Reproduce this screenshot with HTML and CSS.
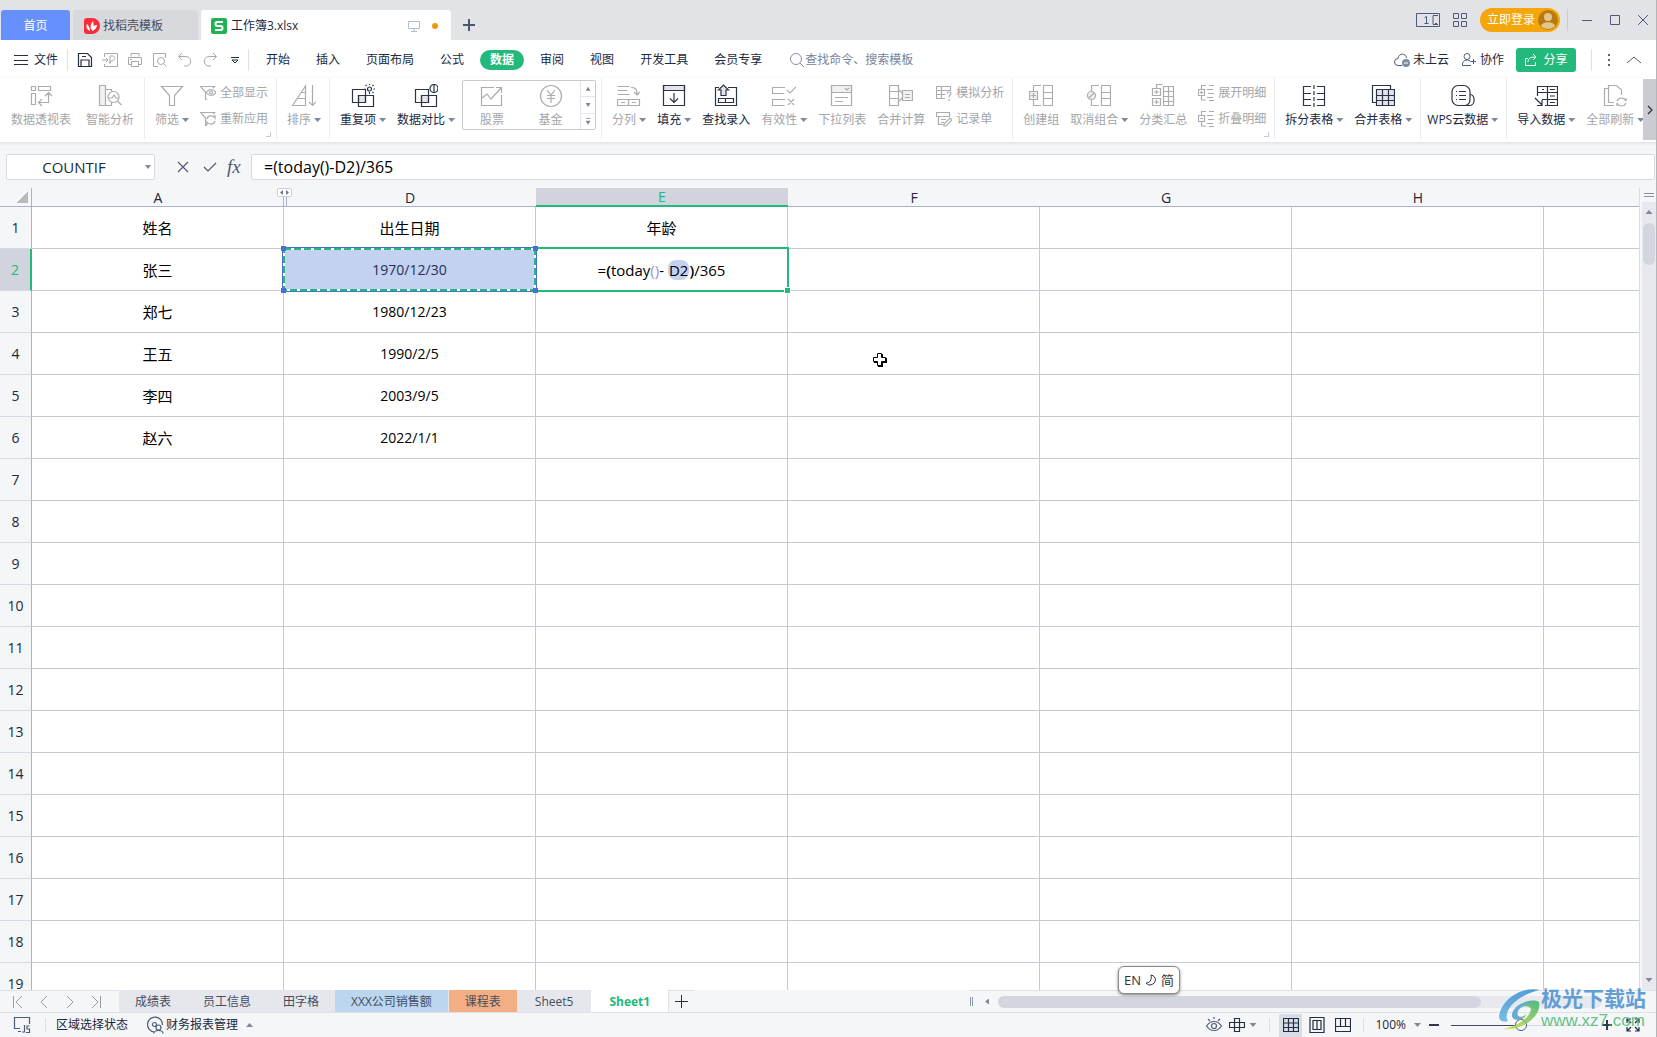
FILE: index.html
```html
<!DOCTYPE html>
<html lang="zh-CN">
<head>
<meta charset="utf-8">
<title>工作簿3.xlsx</title>
<link rel="stylesheet" href="styles.css">
</head>
<body>
<header class="titlebar">
  <button class="doc-tab home">首页</button>
  <button class="doc-tab template">
    <svg width="16" height="16" viewBox="0 0 16 16"><path d="M3 0h5a8 8 0 0 1 0 16H3a3 3 0 0 1-3-3V3a3 3 0 0 1 3-3z" fill="#fb2c36"/><path d="M6 13C2 11 2 8 3 6c2 2 3 4 3 7zM7 12c-1-4 0-7 2-9 1 4 1 6-2 9zM8 13c0-4 2-6 5-6 0 3-2 5-5 6z" fill="#fff"/></svg>
    <span>找稻壳模板</span>
  </button>
  <button class="doc-tab current">
    <svg width="16" height="16" viewBox="0 0 16 16"><rect width="16" height="16" rx="2" fill="#1fb254"/><path d="M12 4H6.500a2 2 0 0 0 0 4h3a2 2 0 0 1 0 4H4" fill="none" stroke="#fff" stroke-width="2"/></svg>
    <span class="doc-name">工作簿3.xlsx</span>
    <svg width="12" height="12" viewBox="0 0 12 12" class="line pale"><path d="M.5 1.500h11v7H.5zM6 8.500v3M3 11.500h6"/></svg>
    <i class="unsaved"></i>
  </button>
  <button class="new-tab" aria-label="新建"><svg width="12" height="12" viewBox="0 0 12 12" stroke="#4a566d" stroke-width="2"><path d="M6 0v12M0 6h12"/></svg></button>
  <div class="window-tools">
    <svg width="24" height="16" viewBox="0 0 24 16" class="line slate"><path d="M.5 1.500h23v13H.5zM8.500 5.500l2-1v7M8.500 11.500h4M22 3.500h-5v9h5M19 11.500h2"/></svg>
    <svg width="14" height="14" viewBox="0 0 14 14" class="line slate"><path d="M.5.5h5v5h-5zM8.500.5h5v5h-5zM.5 8.500h5v5h-5zM8.500 8.500h5v5h-5z"/></svg>
    <button class="login">立即登录<svg width="20" height="20" viewBox="0 0 20 20"><circle cx="10" cy="10" r="10" fill="#b87a0c"/><circle cx="10" cy="7" r="4" fill="#e2c48d"/><path d="M3 16c1-5 13-5 14 0-3 4-11 4-14 0z" fill="#e2c48d"/></svg></button>
    <i class="rule"></i>
    <div class="window-buttons">
      <button aria-label="最小化"><svg width="12" height="12" viewBox="0 0 12 12" class="line slate"><path d="M1 6.500h10"/></svg></button>
      <button aria-label="最大化"><svg width="12" height="12" viewBox="0 0 12 12" class="line slate"><path d="M1.500 1.500h9v9h-9z"/></svg></button>
      <button aria-label="关闭"><svg width="12" height="12" viewBox="0 0 12 12" class="line slate"><path d="M1 1l10 10M11 1L1 11"/></svg></button>
    </div>
  </div>
</header>

<nav class="menubar">
  <button class="file"><svg width="14" height="12" viewBox="0 0 14 12" class="line dark"><path d="M0 1.500h14M0 6.500h14M0 10.500h14"/></svg>文件</button>
  <i class="rule"></i>
  <div class="quick">
    <button aria-label="保存"><svg width="16" height="16" viewBox="0 0 16 16" class="line dark strong"><path d="M1.500 1.500h9l4 4v9h-13zM4 14V8h8v6M5 4.500h4"/></svg></button>
    <button aria-label="输出为PDF"><svg width="16" height="16" viewBox="0 0 16 16" class="line gray"><path d="M2.500 5V1.500h13v13h-13V12M0 8h6M4 6l2 2-2 2M8 12V4h3c3 1 2 4-1 5-2 0-3 1-3 2"/></svg></button>
    <button aria-label="打印"><svg width="16" height="16" viewBox="0 0 16 16" class="line gray"><path d="M4 4.500v-3h8v3M4 12.500H1.500v-7h13v7H12M4.500 9.500h7v5h-7zM3 7.500h2"/></svg></button>
    <button aria-label="打印预览"><svg width="16" height="16" viewBox="0 0 16 16" class="line gray"><path d="M6 14.500H1.500v-13h12V6"/><circle cx="9" cy="9" r="3.500"/><path d="M11.500 11.500l3 3"/></svg></button>
    <button aria-label="撤销"><svg width="16" height="16" viewBox="0 0 16 16" class="line gray"><path d="M5 1L1.500 4.500 5 8M2 4.500h7a4.500 4.500 0 0 1 0 9.500H7"/></svg></button>
    <button aria-label="恢复"><svg width="16" height="16" viewBox="0 0 16 16" class="line gray"><path d="M11 1l3.500 3.500L11 8M14 4.500H7a4.500 4.500 0 0 0 0 9.500h2"/></svg></button>
    <button class="more" aria-label="自定义快速访问"><svg width="8" height="8" viewBox="0 0 8 8" class="line dark"><path d="M0 1.500h8M1 4l3 3 3-3z"/></svg></button>
  </div>
  <i class="rule"></i>
  <div class="tabs">
    <button>开始</button><button>插入</button><button>页面布局</button><button>公式</button><button class="on">数据</button><button>审阅</button><button>视图</button><button>开发工具</button><button>会员专享</button>
  </div>
  <button class="find"><svg width="16" height="16" viewBox="0 0 16 16" class="line blue"><circle cx="7" cy="7" r="5.500"/><path d="M11 11l4 4"/></svg>查找命令、搜索模板</button>
  <div class="menu-right">
    <button><svg width="16" height="16" viewBox="0 0 16 16" class="line slate"><path d="M8 13.500H4a3.500 3.500 0 0 1 0-7C5 .5 12 1 12.500 6"/><circle cx="12" cy="11" r="4" fill="#7f8aa3" stroke="none"/><path d="M10 11h4" stroke="#fff"/></svg>未上云</button>
    <button><svg width="16" height="16" viewBox="0 0 16 16" class="line slate"><circle cx="6" cy="4.500" r="3"/><path d="M10 13.500H1.500C.5 7 9 7 10 10M10 9.500h5M12.500 7v5"/></svg>协作</button>
    <button class="share"><svg width="14" height="14" viewBox="0 0 14 14" class="line white"><path d="M4 5.500H1.500v7h10V9M4 9c0-4 3-5 8-5M9 1l3 3-3 3"/></svg>分享</button>
    <i class="rule"></i>
    <button class="dots" aria-label="更多"><svg width="4" height="14" viewBox="0 0 4 14" fill="#5a6378"><path d="M1 1h2v2H1zM1 6h2v2H1zM1 11h2v2H1z"/></svg></button>
    <button aria-label="折叠功能区"><svg width="14" height="8" viewBox="0 0 14 8" class="line slate"><path d="M0 7l7-6 7 6"/></svg></button>
  </div>
</nav>

<section class="ribbon">
  <div class="groups">
    <div class="group wide">
      <button class="tool off"><svg width="24" height="24" viewBox="0 0 24 24"><path d="M2.500 2.500h4v4h-4zM9.500 2.500h12v4h-12zM2.500 9.500h4v11h-4zM10 18.500h9.500V9M13 15l-3.500 3.500L13 22M16 12l3.500-3.500L23 12"/></svg><span>数据透视表</span></button>
      <button class="tool off"><svg width="24" height="24" viewBox="0 0 24 24"><path class="tint" d="M1.500 1.500h6v20h-6z"/><path d="M7.500 5.500h6V8M13.500 18v3.500h-6"/><circle cx="15.500" cy="13" r="5.500"/><path d="M19.500 17l4 4M11 14h3l2-3 2 3h2"/></svg><span>智能分析</span></button>
    </div>
    <div class="group">
      <button class="tool off"><svg width="24" height="24" viewBox="0 0 24 24"><path d="M1.500 2.500h21l-8 9v10h-5v-10z"/></svg><span>筛选<b class="caret"></b></span></button>
      <div class="pair">
        <button class="small off"><svg width="16" height="16" viewBox="0 0 16 16"><path d="M7 14.500H5.500V7L.5 1.500h14L13 3"/><path d="M6 7.500c3-4 7-4 10 0-3 4-7 4-10 0z"/><circle cx="11" cy="7.500" r="1.500"/></svg>全部显示</button>
        <button class="small off"><svg width="16" height="16" viewBox="0 0 16 16"><path d="M7 14.500H5.500V7L.5 1.500h14L13 3M7 8c1-4 6-4 8-1V4M15 10c-1 4-6 4-8 1v3"/></svg>重新应用</button>
      </div>
      <i class="launcher"></i>
    </div>
    <div class="group">
      <button class="tool off"><svg width="24" height="24" viewBox="0 0 24 24"><path d="M.5 21.500L13.500 2v19.500zM9 8.500h4M5 14.500h8M20.500 1v20M17 18l3.500 3.500L24 18"/></svg><span>排序<b class="caret"></b></span></button>
    </div>
    <div class="group open">
      <button class="tool"><svg width="24" height="24" viewBox="0 0 24 24"><path class="tint" d="M7.500 11.500h7v7h-7z"/><path d="M1.500 5.500h13v13h-13zM7.500 11.500h15v11h-15z"/><circle class="paper" cx="18.500" cy="5" r="2"/><path d="M18.500 0v1M18.500 8v2M13.500 5h1M22.500 5h2M14.500 1l1 1M22.500 1l-1 1M22.500 9l-1-1"/></svg><span>重复项<b class="caret"></b></span></button>
      <button class="tool"><svg width="24" height="24" viewBox="0 0 24 24"><path class="tint" d="M7.500 11.500h7v7h-7z"/><path d="M1.500 5.500h13v13h-13zM7.500 11.500h15v11h-15z"/><circle class="paper" cx="20" cy="4.500" r="4"/><path d="M20 .5v8"/></svg><span>数据对比<b class="caret"></b></span></button>
    </div>
    <div class="group gallery-group">
      <div class="gallery">
        <button class="tool off"><svg width="24" height="24" viewBox="0 0 24 24"><path d="M14 3.500H1.500v18h20V11M2 14l5-4 4 5L21 4M16 3.500h5.500V9"/></svg><span>股票</span></button>
        <button class="tool off"><svg width="24" height="24" viewBox="0 0 24 24"><circle cx="12" cy="12" r="10.500"/><path d="M8 6l4 5 4-5M12 11v8M8 11.500h8M8 14.500h8"/></svg><span>基金</span></button>
        <div class="gallery-scroll"><button aria-label="上一行"><b class="caret up"></b></button><button aria-label="下一行"><b class="caret"></b></button><button aria-label="展开"><b class="caret barred"></b></button></div>
      </div>
    </div>
    <div class="group">
      <button class="tool off"><svg width="24" height="24" viewBox="0 0 24 24"><path d="M.5 2.500h12M.5 6.500h10M.5 10.500h12M14 3.500c4 0 6 1 6 7M17 8l3 3 3-3M.5 15.500h22v6H.5zM11.500 15.500v6M4 18.500h4M15 18.500h4"/></svg><span>分列<b class="caret"></b></span></button>
      <button class="tool"><svg width="24" height="24" viewBox="0 0 24 24"><path class="tint" d="M1.500 1.500h21v5h-21z"/><path d="M1.500 1.500h21v20h-21zM12 9v9M8 14.500l4 4 4-4"/></svg><span>填充<b class="caret"></b></span></button>
      <button class="tool"><svg width="24" height="24" viewBox="0 0 24 24"><path d="M5 3.500H1.500v18h21v-18H14M4.500 14.500h15v4h-15zM11.500 14.500v4"/><path class="tint" d="M7 11.500V6H4.500l5-5 5 5H12v5.500z"/></svg><span>查找录入</span></button>
      <button class="tool off"><svg width="24" height="24" viewBox="0 0 24 24"><path d="M13 3.500H.5v6h12M13 15.500H.5v6h12M15 6l3 3 6-6M16 15l6 6M22 15l-6 6"/></svg><span>有效性<b class="caret"></b></span></button>
      <button class="tool off"><svg width="24" height="24" viewBox="0 0 24 24"><path class="tint" d="M1.500 1.500h20v7h-20z"/><path d="M1.500 1.500h20v20h-20zM15 4l2 2 2-2M5 13.500h13M5 17.500h8"/></svg><span>下拉列表</span></button>
      <button class="tool off"><svg width="24" height="24" viewBox="0 0 24 24"><path d="M.5 1.500h9v20h-9zM.5 7.500h9M.5 14.500h9M10 6l4 4M10 17l4-4"/><path class="tint" d="M13.500 6.500h10v10h-10z"/><path d="M16 10.500h5M16 13.500h5"/></svg><span>合并计算</span></button>
      <div class="pair">
        <button class="small off"><svg width="16" height="16" viewBox="0 0 16 16"><path d="M9 13.500H.5v-12h14V6M.5 5.500h14M.5 9.500h9M5.500 1.500v12M11 8.500c0-2 4-2 4 0s-2 1-2 4M13 14v2"/></svg>模拟分析</button>
        <button class="small off"><svg width="16" height="16" viewBox="0 0 16 16"><path d="M13.500 6V1.500H.5v4h13M2.500 5.500v8H7M5 8.500h5M5 11.500h3M8 15v-2l6-6 2 2-6 6z"/></svg>记录单</button>
      </div>
    </div>
    <div class="group">
      <button class="tool off"><svg width="24" height="24" viewBox="0 0 24 24"><path d="M12 1.500H4.500V7M4.500 16v5.500H12"/><path class="tint" d="M.5 7.500h8v8h-8z"/><path d="M2 11.500h5M4.500 9v5M14.500 1.500h9v20h-9zM14.500 8.500h9M14.500 14.500h9"/></svg><span>创建组</span></button>
      <button class="tool off"><svg width="24" height="24" viewBox="0 0 24 24"><path d="M12 1.500H4.500V7M4.500 16v5.500H12"/><circle class="tint" cx="4.500" cy="11.500" r="4"/><path d="M2 14l5-5M14.500 1.500h9v20h-9zM14.500 8.500h9M14.500 14.500h9"/></svg><span>取消组合<b class="caret"></b></span></button>
      <button class="tool off"><svg width="24" height="24" viewBox="0 0 24 24"><path d="M5.500 4V.5h6M1.500 4.500h8v7h-8zM1.500 14.500h8v7h-8zM3 8h5M5.500 6v4M3 18h5M5.500 16v4M12.500 2.500h10v19h-10zM17.500 2.500v19M12.500 7.500h10M12.500 12.500h10M12.500 17.500h10"/></svg><span>分类汇总</span></button>
      <div class="pair">
        <button class="small off"><svg width="16" height="16" viewBox="0 0 16 16"><path d="M8 .5H3.500V4M3.500 11v4H8M.5 4.500h6v6h-6zM2 7.500h3M3.500 6v3M11 .5h5M9 4.500h6M10 8.500h6M9 12.500h6M11 15.500h5"/></svg>展开明细</button>
        <button class="small off"><svg width="16" height="16" viewBox="0 0 16 16"><path d="M8 .5H3.500V4M3.500 11v4H8M.5 4.500h6v6h-6zM2 7.500h3M11 .5h5M9 4.500h6M10 8.500h6M9 12.500h6M11 15.500h5"/></svg>折叠明细</button>
      </div>
      <i class="launcher"></i>
    </div>
    <div class="group">
      <button class="tool"><svg width="24" height="24" viewBox="0 0 24 24"><path d="M9 2.500H1.500v19H9M1.500 9.500H9M1.500 15.500H9M15 2.500h7.500v19H15M22.500 9.500H15M22.500 15.500H15"/><path d="M12 1v22" stroke-dasharray="4 2"/></svg><span>拆分表格<b class="caret"></b></span></button>
      <button class="tool"><svg width="24" height="24" viewBox="0 0 24 24"><path d="M1.500 18.500v-17h18v17z"/><path class="tint" d="M5.500 5.500h18v16h-18z"/><path d="M5.500 11.500h18M5.500 16.500h18M11.500 5.500v16M17.500 5.500v16"/></svg><span>合并表格<b class="caret"></b></span></button>
    </div>
    <div class="group tight">
      <button class="tool"><svg width="24" height="24" viewBox="0 0 24 24"><path d="M14 21.500H7c-3 0-6-3-6-6v-8c0-3 3-6 6-6h6c3 0 6 3 6 6v8c0 3-2 6-5 6h5c5 0 6-11 0-11M5 7.500h1M8 7.500h7M5 11.500h1M8 11.500h7M5 15.500h1M8 15.500h7"/></svg><span>WPS云数据<b class="caret"></b></span></button>
    </div>
    <div class="group last">
      <button class="tool"><svg width="24" height="24" viewBox="0 0 24 24"><path d="M3.500 12V2.500h20v19H11M3.500 8.500h20M8 15.500h15M13.500 2.500v19M8 5.500h2M16 5.500h5M16 12h5M16 18.500h5M1 14l7 7M8 16v5.500H3"/></svg><span>导入数据<b class="caret"></b></span></button>
      <button class="tool off"><svg width="24" height="24" viewBox="0 0 24 24"><path d="M18.500 11V6l-5-4.500h-8v17H11M5 4.500H1.500v17H11M14 17c2-4 7-4 9 0v-3M23 19c-2 4-7 4-9 0v3"/></svg><span>全部刷新<b class="caret"></b></span></button>
    </div>
  </div>
  <button class="ribbon-next" aria-label="向右滚动"><svg width="6" height="10" viewBox="0 0 6 10" class="line dark strong"><path d="M1 1l4 4-4 4"/></svg></button>
</section>

<section class="formula-bar">
  <div class="name-box"><input aria-label="名称框" value="COUNTIF"><b class="caret"></b></div>
  <div class="entry-buttons">
    <button aria-label="取消"><svg width="12" height="12" viewBox="0 0 12 12" class="line slate strong"><path d="M1 1l10 10M11 1L1 11"/></svg></button>
    <button aria-label="输入"><svg width="14" height="12" viewBox="0 0 14 12" class="line slate strong"><path d="M1 6l4 4 8-8"/></svg></button>
    <button class="fx" aria-label="插入函数">fx</button>
  </div>
  <input class="formula" aria-label="编辑栏" value="=(today()-D2)/365">
</section>

<main class="sheet">
  <div class="grid">
    <table>
      <colgroup><col class="c-num"><col class="c"><col class="c"><col class="c"><col class="c"><col class="c"><col class="c"><col></colgroup>
      <thead><tr><th class="corner"></th><th>A<span class="hidden-cols"><svg width="15" height="9" viewBox="0 0 15 9"><rect x=".5" y=".5" width="14" height="8" rx="1" fill="#fff" stroke="#c9cdd6"/><path d="M6 2v5L3 4.500zM9 2v5l3-2.500z" fill="#6b7690"/></svg></span></th><th>D</th><th class="on">E</th><th>F</th><th>G</th><th>H</th><th></th></tr></thead>
      <tbody>
        <tr class="titles"><th>1</th><td>姓名</td><td>出生日期</td><td>年龄</td><td></td><td></td><td></td><td></td></tr>
        <tr><th class="on">2</th><td>张三</td><td class="ref"><svg class="ants"><rect x="2" y="2" class="ants-back"/><rect x="2" y="2" class="ants-dash"/></svg><i class="knob tl"></i><i class="knob bl"></i><i class="knob tr"></i><i class="knob br"></i><span>1970/12/30</span></td><td class="edit"><span>=<strong>(</strong>today<em>()</em>- <mark>D2</mark><strong>)</strong>/365</span></td><td></td><td></td><td></td><td></td></tr>
        <tr><th>3</th><td>郑七</td><td>1980/12/23</td><td></td><td></td><td></td><td></td><td></td></tr>
        <tr><th>4</th><td>王五</td><td>1990/2/5</td><td></td><td></td><td></td><td></td><td></td></tr>
        <tr><th>5</th><td>李四</td><td>2003/9/5</td><td></td><td></td><td></td><td></td><td></td></tr>
        <tr><th>6</th><td>赵六</td><td>2022/1/1</td><td></td><td></td><td></td><td></td><td></td></tr>
        <tr><th>7</th><td></td><td></td><td></td><td></td><td></td><td></td><td></td></tr>
        <tr><th>8</th><td></td><td></td><td></td><td></td><td></td><td></td><td></td></tr>
        <tr><th>9</th><td></td><td></td><td></td><td></td><td></td><td></td><td></td></tr>
        <tr><th>10</th><td></td><td></td><td></td><td></td><td></td><td></td><td></td></tr>
        <tr><th>11</th><td></td><td></td><td></td><td></td><td></td><td></td><td></td></tr>
        <tr><th>12</th><td></td><td></td><td></td><td></td><td></td><td></td><td></td></tr>
        <tr><th>13</th><td></td><td></td><td></td><td></td><td></td><td></td><td></td></tr>
        <tr><th>14</th><td></td><td></td><td></td><td></td><td></td><td></td><td></td></tr>
        <tr><th>15</th><td></td><td></td><td></td><td></td><td></td><td></td><td></td></tr>
        <tr><th>16</th><td></td><td></td><td></td><td></td><td></td><td></td><td></td></tr>
        <tr><th>17</th><td></td><td></td><td></td><td></td><td></td><td></td><td></td></tr>
        <tr><th>18</th><td></td><td></td><td></td><td></td><td></td><td></td><td></td></tr>
        <tr><th>19</th><td></td><td></td><td></td><td></td><td></td><td></td><td></td></tr>
      </tbody>
    </table>
    <svg class="pointer" width="16" height="16" viewBox="0 0 16 16"><path d="M6 2h5v4h4v5h-4v4H6v-4H2V6h4z" fill="#000"/><path d="M5.500 1.500h4v4h4v4h-4v4h-4v-4h-4v-4h4z" fill="#fff" stroke="#000"/></svg>
  </div>
  <div class="vscroll">
    <i class="split"></i>
    <div class="vtrack"><b class="caret up"></b><i class="vthumb"></i><b class="caret"></b></div>
  </div>
  <div class="ime">EN<svg width="12" height="12" viewBox="0 0 12 12" class="line dark"><path d="M6 1c6 1 6 9-1 10-2 0-3-1-4-2 4 0 6-3 5-8z"/></svg>简</div>
</main>

<nav class="sheet-tabs">
  <div class="steps">
    <button aria-label="第一张"><svg width="10" height="12" viewBox="0 0 10 12"><path d="M.5 0v12M9 0L3 6l6 6"/></svg></button>
    <button aria-label="上一张"><svg width="10" height="12" viewBox="0 0 10 12"><path d="M8 0L2 6l6 6"/></svg></button>
    <button aria-label="下一张"><svg width="10" height="12" viewBox="0 0 10 12"><path d="M2 0l6 6-6 6"/></svg></button>
    <button aria-label="最后一张"><svg width="10" height="12" viewBox="0 0 10 12"><path d="M9.500 0v12M1 0l6 6-6 6"/></svg></button>
  </div>
  <button class="st">成绩表</button><button class="st">员工信息</button><button class="st">田字格</button><button class="st blue-tab">XXX公司销售额</button><button class="st orange-tab">课程表</button><button class="st latin">Sheet5</button><button class="st latin active">Sheet1</button>
  <button class="add" aria-label="新建工作表"><svg width="13" height="13" viewBox="0 0 13 13" class="line dark"><path d="M6.500 0v13M0 6.500h13"/></svg></button>
  <div class="hscroll"><i class="grip"></i><b class="caret left"></b><div class="htrack"><i class="hthumb"></i></div></div>
</nav>

<footer class="status">
  <svg width="18" height="18" viewBox="0 0 18 18" class="line slate strong"><path d="M7 12.500H1.500v-11h15V8M5 15.500h3M11.500 9v7H9M16.500 10H14v3h2.500v3.500H13"/></svg>
  <i class="rule"></i>
  <span class="mode">区域选择状态</span>
  <button><svg width="18" height="18" viewBox="0 0 18 18" class="line slate strong"><path d="M8 16a7.500 7.500 0 1 1 8.500-7"/><circle cx="8.500" cy="8.500" r="2"/><circle cx="12.500" cy="11.500" r="2.500"/><path d="M8 17.500c0-4 9-4 9 0"/></svg>财务报表管理<b class="caret up"></b></button>
  <div class="view-tools">
    <button aria-label="护眼模式"><svg width="16" height="16" viewBox="0 0 16 16" class="line slate strong"><path d="M.5 9c4-6 11-6 15 0-4 6-11 6-15 0zM8 0v2M2 2l2 2M14 2l-2 2"/><circle cx="8" cy="9" r="2.500"/></svg></button>
    <button class="read" aria-label="阅读模式"><svg width="16" height="16" viewBox="0 0 16 16" class="line dark strong"><path d="M5.500 1.500h5v13h-5zM.5 5.500h15v5H.5z"/></svg><b class="caret"></b></button>
    <i class="rule"></i>
    <button class="view on" aria-label="普通视图"><svg width="16" height="14" viewBox="0 0 16 14" class="line dark strong"><path d="M.5.5h15v13H.5zM.5 5h15M.5 9.500h15M5.500.5v13M10.500.5v13"/></svg></button>
    <button class="view" aria-label="分页预览"><svg width="16" height="16" viewBox="0 0 16 16" class="line dark strong"><path d="M1 .5h14v15H1zM4 3.500h8v9H4zM8 3.500v9"/></svg></button>
    <button class="view" aria-label="页面布局"><svg width="16" height="14" viewBox="0 0 16 14" class="line dark strong"><path d="M.5.5h15v13H.5zM5.500.5v8h10M10.500.5v8M5 8.500H.5"/></svg></button>
    <i class="rule"></i>
    <button class="percent">100%<b class="caret"></b></button>
    <button aria-label="缩小"><svg width="10" height="10" viewBox="0 0 10 10" stroke="#2f3a52" stroke-width="2"><path d="M0 5h10"/></svg></button>
    <input class="zoom" type="range" min="0" max="100" value="50" aria-label="缩放">
    <button aria-label="放大"><svg width="10" height="10" viewBox="0 0 10 10" stroke="#2f3a52" stroke-width="2"><path d="M0 5h10M5 0v10"/></svg></button>
    <button aria-label="全屏"><svg width="14" height="14" viewBox="0 0 14 14" class="line dark strong"><path d="M1 5V1h4M1 1l4 4M9 1h4v4M13 1L9 5M1 9v4h4M1 13l4-4M13 9v4H9M13 13L9 9"/></svg></button>
  </div>
</footer>

<div class="watermark">
  <svg width="42" height="42" viewBox="0 0 42 42"><defs><linearGradient id="wave" x2="0" y2="1"><stop offset="0" stop-color="#3a8ed0"/><stop offset="1" stop-color="#62b4e6"/></linearGradient><linearGradient id="leaf" x1="1" x2="0" y2="1"><stop offset="0" stop-color="#36b36a"/><stop offset="1" stop-color="#d8dc4c"/></linearGradient></defs><path d="M41 2C22-2 2 12 0 29c1 5 5 5 9 4C3 24 17 7 41 2z" fill="url(#wave)"/><path d="M40 14c3 13-15 29-36 27 14-3 27-11 28-20-2-5-12-3-14 3-1 6 6 6 9 2 0 6-12 9-14 2C12 18 31 9 40 14z" fill="url(#leaf)"/><path d="M36 14c-12-2-23 5-23 14 1 5 9 5 13 0-5 3-9 0-7-5 3-6 10-7 17-9z" fill="#4c9fd8"/></svg>
  <div><p class="wm-name">极光下载站</p><p class="wm-url">www.xz7.com</p></div>
</div>
</body>
</html>
```
FILE: styles.css
```css
* { box-sizing: border-box; }
body {
  margin: 0;
  height: 100vh;
  display: flex;
  flex-direction: column;
  position: relative;
  overflow: hidden;
  border-right: 1px solid #b4b5b9;
  background: #f5f6f8;
  color: #20283c;
  font: 12px/18px "Open Sans", "Noto Sans CJK SC", sans-serif;
}
button, input { font: inherit; color: inherit; margin: 0; }
button {
  border: 0;
  padding: 0;
  background: none;
  display: flex;
  align-items: center;
  white-space: nowrap;
}
svg { flex: none; display: block; }
.line { fill: none; stroke-width: 1; }
.strong { stroke-width: 1.2; }
.dark { stroke: #242d42; }
.slate { stroke: #4f5b75; }
.gray { stroke: #a7a9ad; }
.pale { stroke: #b3bbcf; }
.blue { stroke: #8390ab; }
.white { stroke: #fff; }
.rule { width: 1px; height: 22px; background: #dcdee3; flex: none; }
.caret {
  display: inline-block;
  flex: none;
  width: 7px;
  height: 4px;
  background: #7c87a0;
  clip-path: polygon(0 0, 100% 0, 50% 100%);
}
.caret.up { clip-path: polygon(50% 0, 100% 100%, 0 100%); }
.caret.left { width: 4px; height: 6px; clip-path: polygon(100% 0, 100% 100%, 0 50%); }
.caret.barred { height: 7px; clip-path: polygon(0 0, 100% 0, 100% 1px, 0 1px, 0 3px, 100% 3px, 50% 100%, 0 3px); }

/* Title bar */
.titlebar { display: flex; align-items: flex-end; height: 40px; background: #e2e3e7; padding-left: 1px; flex: none; }
.doc-tab { height: 30px; padding-top: 1px; border-radius: 3px 3px 0 0; margin-right: 3px; }
.home { width: 69px; justify-content: center; background: #6690fd; color: #fff; }
.template { width: 125px; padding-left: 11px; gap: 3px; background: #d8d9dd; color: #444c5e; }
.current { width: 250px; padding-left: 10px; padding-right: 13px; gap: 4px; background: #fff; margin-right: 12px; }
.doc-name { flex: 1; text-align: left; }
.unsaved { width: 6px; height: 6px; border-radius: 50%; background: #ea9a0b; margin-left: 8px; }
.new-tab { height: 30px; }
.window-tools { margin-left: auto; height: 40px; padding: 0 7px 0 0; display: flex; align-items: center; gap: 13px; }
.window-tools .rule { margin: 0 0 0 -6px; background: #cbccd1; }
.window-buttons { display: flex; gap: 16px; }
.login { height: 24px; border-radius: 12px; padding: 0 2px 0 7px; gap: 3px; background: #f5a60a; color: #fff; }

/* Menu row */
.menubar { display: flex; align-items: center; height: 38px; background: #fff; padding: 2px 0 0 14px; flex: none; }
.menubar .rule { background: #dfe1e6; }
.file { gap: 6px; margin-right: 9px; }
.quick { display: flex; gap: 9px; padding: 0 9px; }
.quick .more { margin-left: 4px; }
.tabs { display: flex; padding-left: 4px; }
.tabs button { height: 20px; padding: 0 10px; margin: 0 3px; border-radius: 10px; }
.tabs .on { background: #22b97b; color: #fff; font-weight: bold; }
.find { margin-left: 14px; color: #77839d; }
.menu-right { margin-left: auto; display: flex; align-items: center; gap: 12px; padding-right: 15px; }
.menu-right button { gap: 3px; }
.menu-right .share { width: 60px; height: 24px; justify-content: center; gap: 5px; border-radius: 3px; background: #22b97b; color: #fff; }
.menu-right .rule { margin: 0 3px; }
.menu-right .dots { margin-right: 4px; }

/* Ribbon */
.ribbon { display: flex; height: 64px; flex: none; background: #fff; box-shadow: 0 1px 3px #d9dbe0; position: relative; }
.groups { display: flex; flex: 1; min-width: 0; overflow: hidden; }
.group {
  display: flex;
  flex: none;
  gap: 11px;
  padding: 1px 8px 0 10px;
  margin-bottom: 3px;
  border-right: 1px solid #ebecef;
  position: relative;
}
.group.wide { gap: 15px; padding: 1px 10px 0 11px; }
.group.open { border: 0; padding-right: 7px; }
.group.gallery-group { padding: 2px 5px 9px 0; }
.group.tight { padding-left: 6px; }
.group.last { border: 0; padding-right: 0; }
.tool { flex-direction: column; padding-top: 5px; gap: 3px; }
.tool span { display: flex; align-items: center; gap: 3px; }
.tool svg, .small svg { fill: none; stroke: #2b3348; stroke-width: 1.2; }
.tool .tint { fill: #e4e5e8; }
.tool .paper { fill: #fff; }
.off { color: #a3a5a9; }
.tool.off svg, .small.off svg { stroke: #aaacb0; }
.off .tint { fill: #f1f1f2; }
.pair { display: flex; flex-direction: column; padding-top: 1px; }
.small { height: 26px; gap: 4px; }
.launcher { position: absolute; right: 5px; bottom: 2px; width: 5px; height: 5px; border: solid #c3c8d4; border-width: 0 1px 1px 0; }
.gallery { display: flex; width: 134px; height: 50px; border: 1px solid #c9cacd; border-radius: 2px; }
.gallery .tool { width: 58px; padding-top: 3px; }
.gallery .tool + .tool { width: 59px; }
.gallery-scroll { display: flex; flex-direction: column; flex: 1; border-left: 1px solid #e6e7ea; }
.gallery-scroll button { flex: 1; justify-content: center; }
.gallery-scroll button + button { border-top: 1px solid #e6e7ea; }
.gallery-scroll .caret { width: 5px; }
.ribbon-next { width: 13px; margin: 1px 0 2px; justify-content: center; background: #caccd2; }

/* Formula bar */
.formula-bar { display: flex; align-items: center; flex: none; height: 46px; padding: 4px 1px 0 6px; font-size: 15px; }
.name-box { display: flex; align-items: center; width: 149px; height: 26px; padding-right: 3px; border: 1px solid #d8dadf; border-radius: 2px; background: #fff; }
.name-box input { flex: 1; min-width: 0; height: 24px; border: 0; padding: 0 4px 0 0; background: none; text-align: center; }
.name-box .caret { width: 6px; }
.entry-buttons { display: flex; align-items: center; gap: 14px; width: 96px; padding-left: 22px; }
.fx { font: italic 19px/24px "Liberation Serif", serif; color: #4f5b75; margin-left: -4px; }
.formula { flex: 1; min-width: 0; height: 26px; padding: 0 12px; border: 1px solid #d8dadf; border-radius: 2px; background: #fff; color: #000; font-size: 16px; }

/* Cells */
.sheet { display: flex; flex: 1; min-height: 0; position: relative; }
.grid { flex: 1; min-width: 0; overflow: hidden; position: relative; border-right: 1px solid #dadce2; }
table { width: 100%; table-layout: fixed; border-spacing: 0; font-size: 14px; line-height: 20px; }
.c-num { width: 32px; }
.c { width: 252px; }
th, td { padding: 0; text-align: center; font-weight: normal; position: relative; }
td { height: 42px; background: #fff; color: #000; border: solid #c3c9da; border-width: 0 1px 1px 0; }
td:nth-child(2), .titles td, .edit { font-size: 15px; }
td:last-child { border-right: 0; }
thead th { height: 19px; line-height: 17px; border-bottom: 1px solid #a9b2c8; vertical-align: bottom; }
th.on { background: #d1d4dc; color: #22b97b; }
thead .on { border-bottom: 2px solid #22b97b; }
tbody th { border-right: 1px solid #a9b2c8; border-bottom: 1px solid #d5d9e3; }
tbody th.on { border-right: 2px solid #22b97b; }
.corner { border-right: 1px solid #a9b2c8; background: linear-gradient(135deg, transparent 50%, #b9b9b9 50%) right 3px bottom 3px / 11px 11px no-repeat; }
.hidden-cols { position: absolute; right: -8px; top: 0; z-index: 1; height: 18px; background: linear-gradient(90deg, #a9b2c8 1px, transparent 1px 3px, #a9b2c8 3px 4px, transparent 4px) 6px 0 no-repeat; }
.ref { background: #c5d1f0; color: #20305a; z-index: 2; }
.ref::before { content: ""; position: absolute; inset: -2px; border: 1px solid #4a6fd0; }
.ants { position: absolute; left: -2px; top: -2px; width: calc(100% + 4px); height: calc(100% + 4px); }
.ants rect { width: calc(100% - 4px); height: calc(100% - 4px); fill: none; stroke-width: 2; }
.ants-back { stroke: #fff; }
.ants-dash { stroke: #22b97b; stroke-dasharray: 7 3; }
.knob { position: absolute; width: 5px; height: 5px; background: #4a6fd0; }
.tl { left: -3px; top: -3px; }
.bl { left: -3px; bottom: -3px; }
.tr { right: -3px; top: -3px; }
.br { right: -3px; bottom: -3px; }
.edit { z-index: 1; }
.edit::before { content: ""; position: absolute; inset: -2px; border: 2px solid #22b97b; }
.edit::after { content: ""; position: absolute; right: -3px; bottom: -3px; width: 5px; height: 5px; background: #22b97b; outline: 1px solid #fff; }
.edit strong { font-weight: 600; }
.edit em { font-style: normal; color: #8b94e0; }
.edit mark { padding: 0 1px; border-radius: 8px; background: #c5d1f0; color: inherit; }
.pointer { position: absolute; left: 872px; top: 164px; }
.ime { position: absolute; right: 476px; bottom: -4px; z-index: 3; display: flex; align-items: center; gap: 4px; height: 28px; padding: 0 5px; border: 1px solid #8f8b8b; border-radius: 6px; background: #fff; box-shadow: 0 1px 3px #777; color: #333; font-size: 13px; }
.vscroll { width: 16px; flex: none; display: flex; flex-direction: column; padding-left: 2px; }
.split { height: 4px; margin: 5px 2px; border: solid #8492ad; border-width: 1px 0; flex: none; }
.vtrack { flex: 1; display: flex; flex-direction: column; align-items: center; padding: 8px 0; background: #e7e9ee; }
.vthumb { width: 12px; height: 42px; margin: 9px 0 auto; border-radius: 6px; background: #d3d6de; }

/* Sheet tabs */
.sheet-tabs { display: flex; height: 23px; flex: none; border-bottom: 1px solid #dfe1e6; color: #454d60; }
.steps, .add, .hscroll { border-top: 1px solid #dfe1e6; }
.steps { display: flex; align-items: center; gap: 16px; width: 119px; padding-left: 13px; }
.steps svg { fill: none; stroke: #9a9da5; }
.st { padding: 1px 16px 0; background: #e6e7ec; }
.latin { padding: 1px 18px 0; }
.blue-tab { background: #bbd6ee; }
.orange-tab { background: #f4ae84; border-left: 1px solid #e6e7ec; }
.active { background: #fff; color: #22b97b; font-weight: bold; }
.add { padding: 0 6px; border-left: 1px solid #dfe1e6; }
.hscroll { display: flex; align-items: center; gap: 12px; margin-left: auto; width: 686px; padding-right: 54px; }
.grip { width: 3px; height: 9px; border: solid #8d98ae; border-width: 0 1px; }
.htrack { flex: 1; height: 12px; margin-left: -3px; border-radius: 6px; background: #e7e9ee; }
.hthumb { display: block; width: 80%; height: 12px; border-radius: 6px; background: #d3d6de; }

/* Status bar */
.status { display: flex; align-items: center; height: 24px; flex: none; padding-left: 13px; }
.status .rule { height: 14px; margin: 0 10px 0 14px; }
.mode { margin-right: 18px; }
.status button { gap: 2px; }
.status button .caret { margin-left: 6px; }
.view-tools { margin-left: auto; display: flex; align-items: center; padding-right: 16px; gap: 7px; }
.view-tools .rule { margin: 0 2px 0 6px; }
.view-tools .read .caret { margin-left: 2px; }
.view { width: 23px; height: 23px; justify-content: center; margin-right: -4px; }
.view.on { background: #d8dce5; }
.percent { margin: 0 1px 0 2px; }
.zoom { appearance: none; width: 140px; height: 12px; margin: 0 4px 0 5px; background: linear-gradient(90deg, #3c4a68 50%, #d5d8df 50%) center / 100% 1px no-repeat; }
.zoom::-webkit-slider-thumb { appearance: none; width: 12px; height: 12px; border: 1px solid #4a566d; border-radius: 50%; background: #fff; }
.view-tools button:last-child { margin-left: 7px; }

/* Site mark */
.watermark { position: absolute; right: 10px; bottom: 7px; display: flex; opacity: .85; z-index: 5; pointer-events: none; }
.watermark p { margin: 0; white-space: nowrap; }
.watermark .wm-name { margin: -3px 0 3px; font: bold 21px/24px "Noto Sans CJK SC", sans-serif; color: #4a90d0; }
.wm-url { font: 17px/18px "Liberation Sans", sans-serif; color: #4fb878; }
```
